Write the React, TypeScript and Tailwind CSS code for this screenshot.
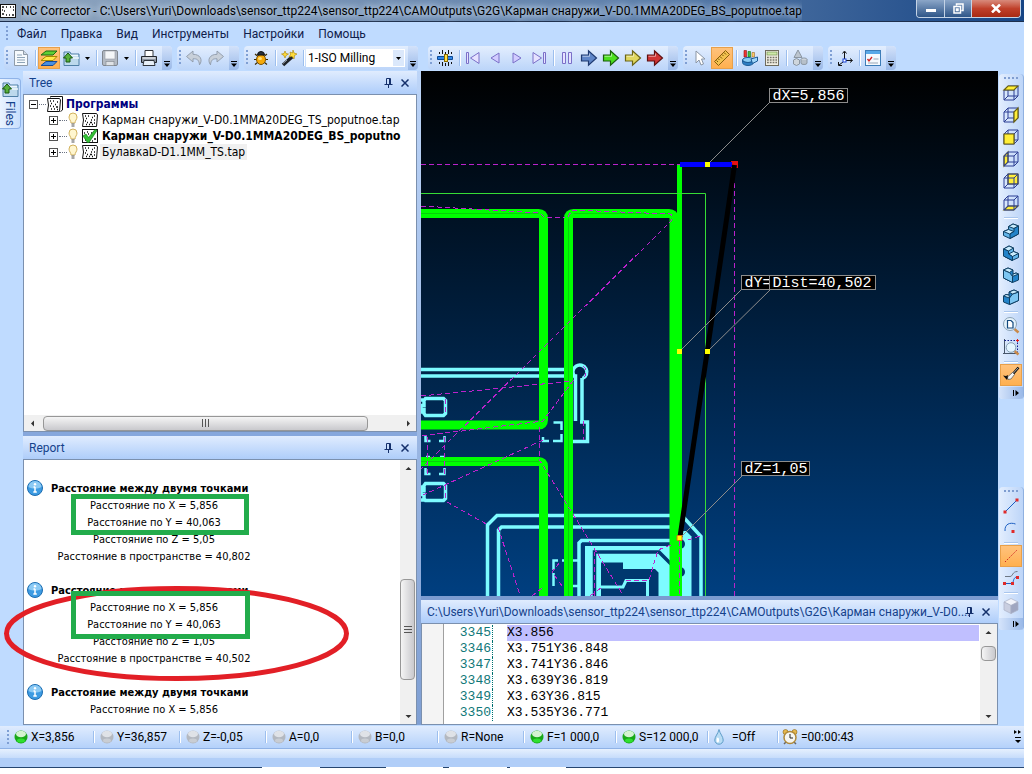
import React from "react";
import clsx from "clsx";

const UI = "font-['Roboto','Noto_Sans',sans-serif]";
const TAHOMA = "font-['DejaVu_Sans_Condensed','DejaVu_Sans',sans-serif]";
const MONO = "font-['Liberation_Mono',monospace]";

type IconProps = { children: React.ReactNode };

const Icon = ({ children }: IconProps) => (
  <svg viewBox="0 0 16 16" className="h-4 w-4 shrink-0 overflow-visible" fill="none">
    {children}
  </svg>
);

/* ---------- icons ---------- */

const ProgramIcon = () => (
  <Icon>
    <path d="M.5 1.500H14.500L15.500 3 14.500 14.500H.5L1.500 8z" fill="#fff" stroke="#111" />
    <path
      d="M3 4h1M6 4h1M12 4h1M4 6.500h1M10 5.500h1M9 8h1M12 8h1M3 9h1M5 10.500h1M8 10.500h2M4 12.500h1M7 12.500h1M10 12.500h1M12 11h1"
      stroke="#111"
      strokeWidth="1.500"
    />
  </Icon>
);

const ProgramGroupIcon = () => (
  <Icon>
    <path d="M3.500 1.500V.5H15.500V14l-2 1.500" fill="#fff" stroke="#111" />
    <path d="M.5 2.500H12.500L13.500 4 12.500 15.500H.5L1.500 9z" fill="#fff" stroke="#111" />
    <path d="M3 5h1M6 5h1M10 6h1M4 7.500h1M8 8.500h1M3 10h1M6 10.500h1M9 11h2M4 13h1M7 13h1M10 13.500h1" stroke="#111" strokeWidth="1.500" />
  </Icon>
);

const CheckedProgramIcon = () => (
  <Icon>
    <rect x=".5" y="1.500" width="15" height="13" fill="#fff" stroke="#111" />
    <path d="M2 5h1M5 4h1M9 5h1M3 12h1M12 11h2M10 13h1M6 6h1" stroke="#111" strokeWidth="1.500" />
    <path d="M1 8l3-2 2.500 3.500L13 1.500l2 1L7 14.500H5.500z" fill="#35c235" stroke="#0f7f18" strokeWidth=".7" />
  </Icon>
);

const BulbIcon = () => (
  <svg viewBox="0 0 10 16" className="h-4 w-[10px]" fill="none">
    <path d="M5 1a4 4 0 0 0-4 4c0 2.500 2 3.500 2 6h4c0-2.500 2-3.500 2-6a4 4 0 0 0-4-4z" fill="#fff6cf" stroke="#d2b25e" />
    <path d="M3.500 12h3M3.500 14h3" stroke="#8a8a8a" strokeWidth="1.500" />
  </svg>
);

const NewIcon = () => (
  <Icon>
    <path d="M1.500.5h9l4 4v11h-13z" fill="#f6fafd" stroke="#8f9ba8" />
    <path d="M10.500.5v4h4" fill="#cfdae5" stroke="#8f9ba8" />
    <path d="M4 5h5M4 7.500h8M4 10h8M4 12.500h8" stroke="#8ea4b8" />
  </Icon>
);

const LayersIcon = () => (
  <Icon>
    <path d="M5 11.500h11l-4 4H0z" fill="#4a8fe0" stroke="#174a98" />
    <path d="M5 6.500h11l-4 4H0z" fill="#ffe94a" stroke="#a68a00" />
    <path d="M5 1h11l-4 4H0z" fill="#5fcf35" stroke="#1c6b12" />
  </Icon>
);

const FolderIcon = () => (
  <Icon>
    <path d="M1 2h6l1 2h8v11.500H1z" fill="#bcd8ec" stroke="#4f7fa6" />
    <path d="M3 5.500h12M4 8h12" stroke="#eef7fd" strokeWidth="1.500" />
    <path d="M5 3l4.500 5H7v4H3V8H.5z" fill="#58b13a" stroke="#17550e" />
  </Icon>
);

const SaveIcon = () => (
  <Icon>
    <rect x=".5" y=".5" width="15" height="15" rx="1.500" fill="#b4bac3" stroke="#80868f" />
    <rect x="3" y="1" width="10" height="8" fill="#f4f6f8" stroke="#969ca4" strokeWidth=".6" />
    <rect x="4" y="11.500" width="8" height="4" fill="#dfe2e6" stroke="#7f858d" strokeWidth=".6" />
  </Icon>
);

const PrinterIcon = () => (
  <Icon>
    <path d="M4 .5h8v6H4z" fill="#fff" stroke="#32363c" />
    <path d="M.5 6.500h15v6H.5z" fill="#8c95a1" stroke="#22262c" />
    <path d="M3 10.500h10l1 5H2z" fill="#e8f0f8" stroke="#30353c" />
    <path d="M1.500 8h13" stroke="#e2e6eb" strokeWidth="1.500" />
  </Icon>
);

const UndoIcon = () => (
  <Icon>
    <path d="M7 1L.5 6.500 7 12V8.800c4-.3 6 1 6.500 6C17 10 14.500 4.300 7 4.300z" fill="#c8d0da" stroke="#8d99a8" strokeWidth=".9" />
  </Icon>
);

const RedoIcon = () => (
  <Icon>
    <path d="M9 1l6.500 5.500L9 12V8.800c-4-.3-6 1-6.500 6C-1 10 1.500 4.300 9 4.300z" fill="#c8d0da" stroke="#8d99a8" strokeWidth=".9" />
  </Icon>
);

const BugIcon = () => (
  <Icon>
    <path d="M2 4l2.500 2M14 4l-2.500 2M1 9.500h3M15 9.500h-3M2 14.500l2.500-2M14 14.500l-2.500-2" stroke="#3a2a00" strokeWidth="1.200" />
    <ellipse cx="8" cy="9.500" rx="4.500" ry="5" fill="#f5a90a" stroke="#7d5200" />
    <path d="M4.500 5a3.500 3.500 0 0 1 7 0z" fill="#26303c" stroke="#111" />
    <ellipse cx="7" cy="8.500" rx="2" ry="1.500" fill="#ffdf7a" />
  </Icon>
);

const WandIcon = () => (
  <Icon>
    <path d="M2 15L12 6" stroke="#20242a" strokeWidth="3.500" />
    <path d="M2 13.500L6 10" stroke="#9aa3ae" />
    <path
      d="M4 1l1 2.500L7.500 4 5 5.500 4 8 3 5.500.5 4 3 3.500zM12 0l1 3 3 1-2.500 1.500L13 9l-2-2.500-3 .5 1.500-2.500L9 2l2.500 1z"
      fill="#ffdc3a"
      stroke="#a87f00"
      strokeWidth=".6"
    />
  </Icon>
);

const FeedIcon = () => (
  <Icon>
    <path d="M2.500 2v2M5.500 0v4M8.500 2v2M11.500 0v4M14.500 2v2M2.500 12v2M5.500 12v4M8.500 13v3M11.500 12v4M14.500 12v2" stroke="#111" />
    <path d="M.5 6.500h15v3H.5z" fill="#2f86e8" stroke="#0d4a96" />
    <rect x="7.500" y="4.500" width="3" height="7" fill="#ffe04a" stroke="#8a6a00" />
  </Icon>
);

const FirstIcon = () => (
  <Icon>
    <path d="M1.500 2.500h2v11h-2zM14 2.500v11L5.500 8z" fill="#e6e2ff" stroke="#7a70c8" />
  </Icon>
);
const PrevIcon = () => (
  <Icon>
    <path d="M12 3v10L4 8z" fill="#d2ccff" stroke="#7a70c8" />
  </Icon>
);
const NextIcon = () => (
  <Icon>
    <path d="M4 3v10l8-5z" fill="#d2ccff" stroke="#7a70c8" />
  </Icon>
);
const LastIcon = () => (
  <Icon>
    <path d="M12.500 2.500h2v11h-2zM2 2.500v11L10.500 8z" fill="#e6e2ff" stroke="#7a70c8" />
  </Icon>
);
const PauseIcon = () => (
  <Icon>
    <path d="M3.500 2.500h3v11h-3zM9.500 2.500h3v11h-3z" fill="#e6e2ff" stroke="#7a70c8" />
  </Icon>
);

const ArrowIcon = ({ color, edge }: { color: string; edge: string }) => (
  <Icon>
    <path d="M.5 5h7V.8L15.500 8l-8 7.200V11h-7z" fill={color} stroke={edge} strokeWidth="1.200" />
    <path d="M1.500 6.300h7V3.500" stroke="#fff" strokeOpacity=".5" />
  </Icon>
);

const CursorIcon = () => (
  <Icon>
    <path d="M4 1v12l3-3 2 5 2.500-1-2-5H13z" fill="#fff" stroke="#8b96a5" />
  </Icon>
);

const RulerIcon = () => (
  <Icon>
    <path d="M11.500.5l4 4-11 11-4-4z" fill="#f3c24f" stroke="#8a5f0c" />
    <path d="M10 2.500l2 2M8 4.500l1.500 1.500M6 6.500l2 2M4 8.500L5.500 10M2.500 10.500l1.500 1.500" stroke="#7a5208" />
  </Icon>
);

const StatsIcon = () => (
  <Icon>
    <path d="M2 .5h2.500V7H2z" fill="#e33" stroke="#911" strokeWidth=".6" />
    <path d="M6 1.500h2.500V7H6z" fill="#4b4" stroke="#171" strokeWidth=".6" />
    <path d="M10 2.500h2.500V7H10z" fill="#fc6" stroke="#963" strokeWidth=".6" />
    <ellipse cx="6" cy="10" rx="5.500" ry="2.500" fill="#8accf5" stroke="#1d5c97" />
    <path d="M.5 10v2.500a5.500 3 0 0 0 11 0V10a5.500 2.500 0 0 1-11 0z" fill="#2d7ec5" stroke="#1d5c97" />
    <path d="M9 9l6.500-2v4l-5 2.500z" fill="#9fd4f8" stroke="#1d5c97" />
  </Icon>
);

const CalcIcon = () => (
  <Icon>
    <rect x="1.500" y=".5" width="13" height="15" fill="#f0eee2" stroke="#6f6c5e" />
    <rect x="3" y="2" width="10" height="3" fill="#cde8a9" stroke="#6d8a4a" strokeWidth=".6" />
    <path d="M3 7.500h10M3 10h10M3 12.500h10" stroke="#77746a" strokeWidth="1.500" strokeDasharray="1.800 1" />
  </Icon>
);

const ConeIcon = () => (
  <Icon>
    <path d="M6 0L2 7.500h8z" fill="#bcc5cf" stroke="#8c97a3" />
    <path d="M1.500 10l3-1.500 3 1.500v4l-3 1.500-3-1.500z" fill="#cfd6dd" stroke="#8c97a3" />
    <ellipse cx="12" cy="9.500" rx="3" ry="1.500" fill="#dfe4e9" stroke="#8c97a3" />
    <path d="M9 9.500v3.500a3 1.500 0 0 0 6 0V9.500" fill="#b7c0ca" stroke="#8c97a3" />
  </Icon>
);

const AxesIcon = () => (
  <Icon>
    <path d="M7.500 9V2M9 10.500h6M6 12l-4 3" stroke="#111" />
    <path d="M5.500 3.500l2-2.500 2 2.500M13 8.500l2.500 2-2.500 2M1.500 12v3.500H5" stroke="#111" />
    <rect x="6" y="9" width="3" height="3" fill="#fff" stroke="#1b45d8" />
  </Icon>
);

const OptionsIcon = () => (
  <Icon>
    <rect x=".5" y=".5" width="15" height="15" fill="#f6fafe" stroke="#3d7db8" />
    <path d="M1 2.500h14" stroke="#5aa9e8" strokeWidth="3" />
    <path d="M2.500 9l1.500 2 3-4" stroke="#d02323" strokeWidth="1.300" />
    <path d="M8.500 9h5M3 13h10" stroke="#9aa6b4" />
  </Icon>
);

const cubeFaces: Record<string, string> = {
  top: "M1 5L5 1h10l-4 4z",
  right: "M11 5l4-4v10l-4 4z",
  front: "M1 5h10v10H1z",
  left: "M1 5l4-4v10l-4 4z",
  back: "M5 1h10v10H5z",
  bottom: "M1 15l4-4h10l-4 4z",
};

const CubeIcon = ({ face }: { face: string }) => {
  const plane = <path d={cubeFaces[face]} fill="#ffee38" stroke="#6b6110" strokeWidth="1.200" />;
  const hidden = face === "back" || face === "bottom" || face === "left";
  return (
    <Icon>
      {hidden && plane}
      <path d="M1 5h10v10H1zM5 1h10v10H5zM1 5l4-4M11 5l4-4M1 15l4-4M11 15l4-4" stroke="#2d3f94" />
      {!hidden && plane}
    </Icon>
  );
};

const SolidIcon = ({ variant }: { variant: number }) => (
  <Icon>
    {variant === 0 && (
      <g stroke="#0f3f63" strokeLinejoin="round">
        <path d="M.5 8.500l5-2V3.500L10 1l5.500 2v8L7 15.500l-6.500-3z" fill="#63b6ea" />
        <path d="M5.500 3.500L10 1l5.500 2-4.500 2.500zM.5 8.500l5-2 5.500 2-4.500 2.500z" fill="#c9ecfd" />
        <path d="M11 5.500L15.500 3v8L7 15.500V11l4-2.500z" fill="#2283c9" />
      </g>
    )}
    {variant === 1 && (
      <g stroke="#0f3f63" strokeLinejoin="round">
        <path d="M.5 4L6 1l4.500 2v3.500l5 2v4L9 15.500.5 11z" fill="#63b6ea" />
        <path d="M.5 4L6 1l4.500 2L5.500 6zM5.500 9l5-2.500 5 2-6 3z" fill="#c9ecfd" />
        <path d="M.5 4l5 2v3l4 2.500v4L.5 11z" fill="#2283c9" />
      </g>
    )}
    {variant === 2 && (
      <g stroke="#0f3f63" strokeLinejoin="round">
        <path d="M.5 3L5 1l5 2v4l3-1 2.500 1v6l-6 2.500L.5 11z" fill="#2283c9" />
        <path d="M.5 3l6 2.500 3 4v6L.5 11z" fill="#7cc6f2" />
        <path d="M.5 3L5 1l5 2-3.500 2.500zM9.500 9.500L10 7l3-1 2.500 1z" fill="#c9ecfd" />
      </g>
    )}
    {variant === 3 && (
      <g stroke="#0f3f63" strokeLinejoin="round">
        <path d="M15.500 3L11 1 6 3v3L3 5.500.5 7v6l6 2.500 9-4z" fill="#2283c9" />
        <path d="M15.500 3v8.500l-9 4V9l3-4z" fill="#7cc6f2" />
        <path d="M15.500 3L11 1 6 3l3.500 2zM.5 7L3 5.500 6 6l.5 3z" fill="#c9ecfd" />
      </g>
    )}
  </Icon>
);

const ZoomPageIcon = () => (
  <Icon>
    <path d="M11.500 12l4 3.500" stroke="#c98a4a" strokeWidth="2.500" />
    <circle cx="7" cy="7" r="6.500" fill="#e4f2fb" stroke="#8aa2b6" />
    <path d="M4.500 3.500h3.500l2 2v5.500H4.500z" fill="#fff" stroke="#12497e" strokeWidth="1.200" />
  </Icon>
);

const ZoomAreaIcon = () => (
  <Icon>
    <path d="M1.500 0v15M0 14.500h15" stroke="#47566a" />
    <path d="M1.500 1.500h13v13" stroke="#101b8a" strokeDasharray="1.500 1.500" />
    <path d="M11.500 12l4 3.500" stroke="#c98a4a" strokeWidth="2.500" />
    <circle cx="8" cy="8.500" r="4.800" fill="#e4f5ff" stroke="#86a0b4" />
    <path d="M14.500 0v3M13 1.500h3" stroke="#e01818" />
  </Icon>
);

const BrushIcon = () => (
  <Icon>
    <path d="M15.500.5L9 8" stroke="#111" strokeWidth="2.500" />
    <path d="M15 1L9.500 7" stroke="#e8e8e8" strokeWidth=".7" />
    <path d="M9.500 5.500l2 2L8 12l-3 .5L4.500 10z" fill="#f4f4f4" stroke="#555" strokeWidth=".7" />
    <path d="M0 8.500l3 .5 2-1-.5 3.500L4 13z" fill="#111" />
  </Icon>
);

const LineIcon = () => (
  <Icon>
    <path d="M2 14L14 2" stroke="#1c5fc2" />
    <path d="M.5 12.500h3v3h-3zM12.500.5h3v3h-3z" fill="#e02a2a" />
  </Icon>
);
const ArcIcon = () => (
  <Icon>
    <path d="M2 11C1.500 4 7 2 12.500 4" stroke="#1c5fc2" />
    <path d="M8.500 10h3v3h-3z" fill="#e02a2a" />
  </Icon>
);
const DashIcon = () => (
  <Icon>
    <path d="M2 14L14 2" stroke="#cc2020" strokeDasharray="1.500 1.500" />
  </Icon>
);
const ContourIcon = () => (
  <Icon>
    <path d="M2 6.500h5c3 0 2-5 7.500-5" stroke="#6e7783" />
    <path d="M2 13.500h7c2 0 0-5 5-7" stroke="#1c5fc2" />
    <path d="M0 12h3v3H0zM8 12h3v3H8zM13 6h3v3h-3z" fill="#e02a2a" />
  </Icon>
);
const GreyCubeIcon = () => (
  <Icon>
    <path d="M8 .5l7 3.500-7 3.500L1 4z" fill="#f1f3fa" stroke="#aab0c4" strokeWidth=".7" />
    <path d="M1 4l7 3.500v8L1 12z" fill="#c9cee0" stroke="#aab0c4" strokeWidth=".7" />
    <path d="M15 4L8 7.500v8l7-3.500z" fill="#9fa6c0" stroke="#aab0c4" strokeWidth=".7" />
  </Icon>
);

const InfoIcon = () => (
  <Icon>
    <circle cx="8" cy="8" r="7.500" fill="#3d9be2" stroke="#1c6cb0" />
    <path d="M1.500 7a6.500 6 0 0 1 13 0c-4 2-9 2-13 0z" fill="#8ccaf4" />
    <path d="M8 6.800v5M6.500 7h1.500M6.300 12h3.500" stroke="#fff" strokeWidth="1.500" />
    <circle cx="8" cy="4.200" r="1.200" fill="#fff" />
  </Icon>
);

const PinIcon = () => (
  <svg viewBox="0 0 9 10" className="h-[10px] w-[9px]" fill="none" stroke="#15306b">
    <path d="M2.500 6V.5h4V6M.5 6.500h8M4.500 7v3M5.500 1v5" />
  </svg>
);
const CloseIcon = () => (
  <svg viewBox="0 0 8 8" className="h-2 w-2" fill="none" stroke="#15306b" strokeWidth="1.500">
    <path d="M.5.5l7 7M7.500.5l-7 7" />
  </svg>
);

/* ---------- toolbar pieces ---------- */

const Grip = () => (
  <span className="mx-[2px] my-1 w-[2px] self-stretch bg-[repeating-linear-gradient(#7f9fd4_0_2px,transparent_2px_4px)]" />
);
const Sep = () => (
  <span className="flex w-[6px] justify-center self-stretch py-1">
    <span className="w-px bg-[#9dbfee] shadow-[1px_0_#fff]" />
  </span>
);

const ToolButton = ({ label, active, children }: { label: string; active?: boolean; children: React.ReactNode }) => (
  <button
    aria-label={label}
    className={clsx(
      "flex h-[22px] w-[22px] shrink-0 items-center justify-center",
      active && "border border-[#e8a04a] bg-gradient-to-b from-[#ffc27c] to-[#ffb04f]"
    )}>
    {children}
  </button>
);

const DropArrow = () => (
  <button aria-label="Список" className="flex w-[11px] items-center justify-center">
    <svg viewBox="0 0 5 3" className="h-[3px] w-[5px]">
      <path d="M0 0h5L2.500 3z" fill="#000" />
    </svg>
  </button>
);

const Overflow = () => (
  <button
    aria-label="Ещё"
    className="ml-[2px] flex w-[10px] items-end justify-center self-stretch rounded-r bg-gradient-to-b from-[#d3e2fa] to-[#9ab9e8] pb-[3px]">
    <svg viewBox="0 0 6 6" className="h-[6px] w-[6px]">
      <path d="M0 0h6v1H0zM0 2.500h6L3 6z" fill="#000" />
    </svg>
  </button>
);

const Toolbar = ({ children }: { children: React.ReactNode }) => (
  <div className="flex h-6 items-center rounded bg-gradient-to-b from-[#e3eefe] to-[#bcd5f9]">
    <Grip />
    {children}
    <Overflow />
  </div>
);

const SideToolbar = ({ children }: { children: React.ReactNode }) => (
  <div className="flex w-[25px] flex-col items-center rounded border-r border-[#8fb0e0] bg-gradient-to-r from-[#e3eefe] to-[#bdd5f8]">
    <span className="mx-1 my-[3px] h-[2px] w-[14px] bg-[repeating-linear-gradient(90deg,#7f9dd0_0_2px,transparent_2px_4px)]" />
    {children}
    <button
      aria-label="Ещё"
      className="mt-px flex h-3 w-full items-center justify-end rounded-b bg-gradient-to-r from-[#d5e4fb] to-[#9ab9e8] pr-1">
      <svg viewBox="0 0 6 6" className="h-[6px] w-[6px]">
        <path d="M0 0h1v6H0zM2.500 0v6L6 3z" fill="#000" />
      </svg>
    </button>
  </div>
);

const SideSep = () => (
  <span className="flex h-[6px] items-center">
    <span className="h-px w-[14px] bg-[#a9c6ee] shadow-[0_1px_#fff]" />
  </span>
);

const PanelHeader = ({ title }: { title: string }) => (
  <div
    className={clsx(
      "flex h-6 shrink-0 items-center gap-2 border-b border-[#7b90ae] bg-gradient-to-b from-[#e0ecfe] to-[#aecdfa] pr-2 pl-[6px] text-[12px] text-[#15428b]",
      UI
    )}>
    <h2 className="min-w-0 flex-1 whitespace-nowrap">{title}</h2>
    <button aria-label="Закрепить">
      <PinIcon />
    </button>
    <button aria-label="Закрыть">
      <CloseIcon />
    </button>
  </div>
);

const ScrollArrow = ({ dir }: { dir: "up" | "down" | "left" | "right" }) => {
  const paths = {
    up: "M.5 5h6L3.500 2z",
    down: "M.5 2h6L3.500 5z",
    left: "M5 .5v6L2 3.500z",
    right: "M2 .5v6l3-3z",
  };
  return (
    <button aria-label={dir} className="flex h-4 w-4 shrink-0 items-center justify-center">
      <svg viewBox="0 0 7 7" className="h-[7px] w-[7px]">
        <path d={paths[dir]} fill="#333" />
      </svg>
    </button>
  );
};

/* ---------- data ---------- */

const menu = ["Файл", "Правка", "Вид", "Инструменты", "Настройки", "Помощь"];

const programs = [
  { name: "Карман снаружи_V-D0.1MMA20DEG_TS_poputnoe.tap", state: "normal" },
  { name: "Карман снаружи_V-D0.1MMA20DEG_BS_poputno", state: "current" },
  { name: "БулавкаD-D1.1MM_TS.tap", state: "selected" },
];

const reports = [
  ["Расстояние по X = 5,856", "Расстояние по Y = 40,063", "Расстояние по Z = 5,05", "Расстояние в пространстве = 40,802"],
  ["Расстояние по X = 5,856", "Расстояние по Y = 40,063", "Расстояние по Z = 1,05", "Расстояние в пространстве = 40,502"],
  ["Расстояние по X = 5,856"],
];

const codeLines = [
  { n: 3345, text: "X3.856" },
  { n: 3346, text: "X3.751Y36.848" },
  { n: 3347, text: "X3.741Y36.846" },
  { n: 3348, text: "X3.639Y36.819" },
  { n: 3349, text: "X3.63Y36.815" },
  { n: 3350, text: "X3.535Y36.771" },
];

const axes = [
  { text: "X=3,856", on: true, width: "w-[86px]" },
  { text: "Y=36,857", on: false, width: "w-[86px]" },
  { text: "Z=-0,05", on: false, width: "w-[86px]" },
  { text: "A=0,0", on: false, width: "w-[86px]" },
  { text: "B=0,0", on: false, width: "w-[86px]" },
  { text: "R=None", on: false, width: "w-[86px]" },
  { text: "F=1 000,0", on: true, width: "w-[92px]" },
  { text: "S=12 000,0", on: true, width: "w-[92px]" },
];

/* ---------- sections ---------- */

function TitleBar() {
  return (
    <header className="flex h-[22px] shrink-0 items-start border-b border-[#1d2f4d] bg-gradient-to-r from-[#8fa5bf] via-[#5f81ac] via-60% to-[#164585] pr-[3px]">
      <svg viewBox="0 0 16 14" className="mt-1 h-[14px] w-4 shrink-0" fill="none">
        <rect x=".5" y=".5" width="15" height="13" fill="#fff" stroke="#111" />
        <path d="M2 3h2M6 3h1M10 3h1M13 3h1M2 6h1M4 7h1M2 10h2M6 11h1M9 11h1M12 11h2M13 6h1" stroke="#111" strokeWidth="1.500" />
      </svg>
      <h1
        className={clsx(
          "ml-[5px] min-w-0 truncate text-[12px] leading-[22px] text-black [text-shadow:0_0_6px_#d8e6f5,0_0_8px_#d8e6f5]",
          UI
        )}>
        NC Corrector - C:\Users\Yuri\Downloads\sensor_ttp224\sensor_ttp224\CAMOutputs\G2G\Карман
        снаружи_V-D0.1MMA20DEG_BS_poputnoe.tap
      </h1>
      <div className="ml-auto flex h-[18px] shrink-0 overflow-hidden rounded-b border border-t-0 border-[#c4d3e6]">
        <button
          aria-label="Свернуть"
          className="flex w-7 items-center justify-center border-r border-[#c4d3e6] bg-gradient-to-b from-[#8ba6c8] to-[#2f5688]">
          <span className="mt-1 h-[3px] w-[10px] bg-white" />
        </button>
        <button
          aria-label="Восстановить"
          className="flex w-[27px] items-center justify-center border-r border-[#c4d3e6] bg-gradient-to-b from-[#8ba6c8] to-[#2f5688]">
          <svg viewBox="0 0 11 11" className="h-[11px] w-[11px]" fill="none" stroke="#fff" strokeWidth="1.500">
            <path d="M3.500 2.500v-1.500h6.500v6.500H8.500M1 3.500h6.500V10H1zM3.500 6h1.500v1.500H3.500z" />
          </svg>
        </button>
        <button
          aria-label="Закрыть"
          className="flex w-12 items-center justify-center bg-gradient-to-b from-[#d88a7b] via-[#c0402a] to-[#a82a14]">
          <svg viewBox="0 0 10 9" className="h-[9px] w-[10px]" fill="none" stroke="#fff" strokeWidth="2.500">
            <path d="M1 .5l8 8M9 .5l-8 8" />
          </svg>
        </button>
      </div>
    </header>
  );
}

function MenuBar() {
  return (
    <nav className={clsx("flex h-6 shrink-0 items-center pl-1 text-[12px] text-[#10204a]", UI)}>
      <Grip />
      {menu.map((item) => (
        <button key={item} className="px-[7px]">
          {item}
        </button>
      ))}
    </nav>
  );
}

function Toolbars() {
  return (
    <div className="flex h-[25px] shrink-0 gap-[5px] pl-1">
      <Toolbar>
        <ToolButton label="Новый"><NewIcon /></ToolButton>
        <Sep />
        <ToolButton label="Слои" active><LayersIcon /></ToolButton>
        <ToolButton label="Открыть"><FolderIcon /></ToolButton>
        <DropArrow />
        <Sep />
        <ToolButton label="Сохранить"><SaveIcon /></ToolButton>
        <DropArrow />
        <Sep />
        <ToolButton label="Печать"><PrinterIcon /></ToolButton>
      </Toolbar>
      <Toolbar>
        <ToolButton label="Отменить"><UndoIcon /></ToolButton>
        <ToolButton label="Повторить"><RedoIcon /></ToolButton>
      </Toolbar>
      <Toolbar>
        <ToolButton label="Отладка"><BugIcon /></ToolButton>
        <Sep />
        <ToolButton label="Мастер"><WandIcon /></ToolButton>
        <Sep />
        <div className="relative mr-px w-[99px]">
          <select
            aria-label="Постпроцессор"
            className={clsx("block h-[18px] w-full appearance-none bg-white pl-[2px] text-[12px] leading-[18px] text-black", UI)}>
            <option>1-ISO Milling</option>
          </select>
          <span className="pointer-events-none absolute inset-y-px right-px flex w-[11px] items-center justify-center bg-[#dbe8fb]">
            <svg viewBox="0 0 5 3" className="h-[3px] w-[5px]">
              <path d="M0 0h5L2.500 3z" fill="#000" />
            </svg>
          </span>
        </div>
      </Toolbar>
      <span className="w-0" />
      <Toolbar>
        <ToolButton label="Скорость"><FeedIcon /></ToolButton>
        <Sep />
        <ToolButton label="В начало"><FirstIcon /></ToolButton>
        <ToolButton label="Назад"><PrevIcon /></ToolButton>
        <ToolButton label="Вперёд"><NextIcon /></ToolButton>
        <ToolButton label="В конец"><LastIcon /></ToolButton>
        <Sep />
        <ToolButton label="Пауза"><PauseIcon /></ToolButton>
        <ToolButton label="Шаг"><ArrowIcon color="#5f86c8" edge="#1f3a70" /></ToolButton>
        <ToolButton label="Пуск"><ArrowIcon color="#4be01e" edge="#1a5c0c" /></ToolButton>
        <ToolButton label="До точки"><ArrowIcon color="#e0d75e" edge="#6b6415" /></ToolButton>
        <ToolButton label="До конца"><ArrowIcon color="#cf3434" edge="#5e1010" /></ToolButton>
      </Toolbar>
      <Toolbar>
        <ToolButton label="Выбор"><CursorIcon /></ToolButton>
        <ToolButton label="Измерить" active><RulerIcon /></ToolButton>
        <Sep />
        <ToolButton label="Статистика"><StatsIcon /></ToolButton>
        <ToolButton label="Калькулятор"><CalcIcon /></ToolButton>
        <Sep />
        <ToolButton label="Тела"><ConeIcon /></ToolButton>
      </Toolbar>
      <Toolbar>
        <ToolButton label="Оси"><AxesIcon /></ToolButton>
        <Sep />
        <ToolButton label="Параметры"><OptionsIcon /></ToolButton>
      </Toolbar>
    </div>
  );
}

const Expander = ({ open }: { open?: boolean }) => (
  <button aria-label={open ? "Свернуть" : "Развернуть"} className="shrink-0">
    <svg viewBox="0 0 9 9" className="h-[9px] w-[9px]" fill="none" stroke="#555">
      <rect x=".5" y=".5" width="8" height="8" fill="#fff" />
      <path d={open ? "M2 4.500h5" : "M2 4.500h5M4.500 2v5"} stroke="#000" />
    </svg>
  </button>
);

function TreePanel() {
  return (
    <section className="flex min-h-0 flex-[361_1_0] flex-col">
      <PanelHeader title="Tree" />
      <div className="flex min-h-0 flex-1 flex-col border border-t-0 border-[#7b90ae] bg-white">
        <div className={clsx("min-h-0 flex-1 overflow-hidden pt-px pl-[5px] text-[12px] leading-4 text-black", TAHOMA)}>
          <div className="flex h-4 items-center">
            <Expander open />
            <span className="mx-px w-[7px] border-t border-dotted border-gray-500" />
            <ProgramGroupIcon />
            <span className="pl-[3px] font-bold text-[#000080]">Программы</span>
          </div>
          <ul className="pl-[15px]">
            {programs.map((p) => (
              <li key={p.name} className="flex h-4 items-center whitespace-nowrap">
                <span className="mr-1 h-4 w-px shrink-0" />
                <Expander />
                <span className="mx-px w-2 shrink-0 border-t border-dotted border-gray-500" />
                <span className="mr-1 shrink-0">
                  <BulbIcon />
                </span>
                {p.state === "current" ? <CheckedProgramIcon /> : <ProgramIcon />}
                <span
                  className={clsx(
                    "ml-[2px] px-[2px]",
                    p.state === "current" && "font-bold",
                    p.state === "selected" && "bg-[#f0f0f0]"
                  )}>
                  {p.name}
                </span>
              </li>
            ))}
          </ul>
        </div>
        <div className="flex h-4 shrink-0 items-center bg-[#f0f0f0]">
          <ScrollArrow dir="left" />
          <div className="ml-[3px] flex h-[15px] flex-1 items-center justify-center gap-[2px] rounded-sm border border-[#979797] bg-gradient-to-b from-[#f5f5f5] to-[#c9c9cd]">
            <span className="h-2 w-px bg-[#555]" />
            <span className="h-2 w-px bg-[#555]" />
            <span className="h-2 w-px bg-[#555]" />
          </div>
          <span className="w-8" />
          <ScrollArrow dir="right" />
        </div>
      </div>
    </section>
  );
}

function ReportPanel() {
  return (
    <section className="relative flex min-h-0 flex-[289_1_0] flex-col">
      <PanelHeader title="Report" />
      <div className="flex min-h-0 flex-1 border border-t-0 border-[#7b90ae] bg-white">
        <div className={clsx("min-w-0 flex-1 overflow-hidden pt-5 pl-[3px] text-[11px] leading-[17px] text-black", TAHOMA)}>
          {reports.map((lines, i) => (
            <article key={i} className="mb-[17px] flex items-start gap-2">
              <InfoIcon />
              <div className="w-[206px] text-center">
                <h3 className="text-left font-bold">Расстояние между двумя точками</h3>
                {lines.map((line) => (
                  <p key={line}>{line}</p>
                ))}
              </div>
            </article>
          ))}
        </div>
        <div className="flex w-4 flex-col bg-[#f0f0f0]">
          <ScrollArrow dir="up" />
          <span className="flex-[102_1_0]" />
          <div className="flex w-[15px] flex-[98_1_0] flex-col items-center justify-center gap-[2px] rounded-sm border border-[#979797] bg-gradient-to-r from-[#f5f5f5] to-[#c9c9cd]">
            <span className="h-px w-2 bg-[#555]" />
            <span className="h-px w-2 bg-[#555]" />
            <span className="h-px w-2 bg-[#555]" />
          </div>
          <span className="flex-[28_1_0]" />
          <ScrollArrow dir="down" />
        </div>
      </div>
      {/* hand-drawn marks over the report */}
      <svg
        viewBox="0 436 360 260"
        className="pointer-events-none absolute top-0 -left-[23px] h-[260px] w-[360px]"
        fill="none"
        strokeWidth="5">
        <ellipse cx="176.500" cy="633.500" rx="170" ry="45" stroke="#e21f26" />
        <rect x="73.500" y="496.500" width="173" height="36" stroke="#22ac4b" />
        <rect x="73.500" y="593.500" width="174" height="43" stroke="#22ac4b" />
      </svg>
    </section>
  );
}

const Label = ({ x, y, w, text }: { x: number; y: number; w: number; text: string }) => (
  <g>
    <rect x={x} y={y} width={w} height="14" fill="#000" stroke="#8c8c8c" />
    <text x={x + 3} y={y + 11} fill="#fff" className={clsx("text-[15px]", MONO)}>
      {text}
    </text>
  </g>
);

function Viewport() {
  return (
    <svg viewBox="421 71 577 525" preserveAspectRatio="xMinYMin slice" className="block min-h-0 w-full flex-[525_1_0]" fill="none">
      <defs>
        <linearGradient id="sky" x1="0" y1="0" x2="0" y2="1">
          <stop offset="0" stopColor="#000000" />
          <stop offset="1" stopColor="#003f80" />
        </linearGradient>
      </defs>
      <rect x="421" y="71" width="577" height="525" fill="url(#sky)" />

      {/* copper tracks */}
      <g stroke="#7dfbff" strokeWidth="3.500">
        <path d="M421 369.500H573M421 376H575.500V421M582 378V421" />
        <path d="M574.500 376.500A7 7 0 1 1 582.500 378.500" />
        <path d="M580 422H587.500V441.500H573" />
        <path d="M421 400h3M421 412h3M425.500 398.500h18l2 2v13l-2 2h-18l-1.500-2v-4h-3v-4h3v-5z" />
        <path d="M421 487h3M421 500h3M425.500 483.500h18l2 2v13l-2 2h-18l-1.500-2v-4h-3v-4h3v-5z" />
        <path d="M425.500 435v6h5M439 441h5.500v-5M425.500 468v6h5M439 474h5.500v-6M426 457h4M440 457h4" strokeWidth="2.500" />
        <path d="M543 437v4h6M553 441h8.500v-7M561.500 430v-7.500h-8" strokeWidth="2.500" />
        <path d="M487.500 596V525L497 515.500H682L701 536.500V596" />
        <path d="M498.500 596V530L501.500 527H682" />
        <path d="M579 596V543L581.500 540.500H672" />
        <path d="M580 560.500H562M558 560.500H553.500V570M553.500 573V586M573 586H579" strokeWidth="2.500" />
      </g>
      <path d="M585 546H672V596H585z" fill="#7dfbff" />
      <path d="M678 531H686L691.500 536.500V596H678z" fill="#7dfbff" />
      <path d="M594.500 596V552H659L671 564" stroke="#00386f" strokeWidth="3.500" />
      <path d="M601 562.500H623V569H655L658.500 572.500V596H601z" fill="#00386f" />
      <path d="M601 587H623L626 580.500H647.500V596" stroke="#7dfbff" strokeWidth="3" />
      <circle cx="680" cy="544" r="5" fill="#00386f" />
      <circle cx="680" cy="572" r="5" fill="#00386f" />

      {/* milled contours */}
      <g stroke="#00ff00" strokeWidth="9">
        <path d="M421 213.500H538.500Q543.500 213.500 543.500 218.500V420Q543.500 425 538.500 425H421" />
        <path d="M421 461.500H538.500Q543.500 461.500 543.500 466.500V596" />
        <path d="M568.500 596V218.500Q568.500 213.500 573.500 213.500H669Q674 213.500 674 218.500V596" />
        <path d="M679.500 165V596" strokeWidth="5" />
      </g>
      <path d="M421 213.500H539M568.500 596V218.500M573.500 213.500H669M421 461.500H539" stroke="#14901a" strokeOpacity=".45" strokeWidth="1" />
      <path d="M421 193.500H705.500V596" stroke="#36dc36" />

      {/* rapid moves */}
      <g stroke="#bb22cc" strokeDasharray="5 3" shapeRendering="crispEdges">
        <path d="M421 164.500H680M734.500 183V596" />
        <path d="M421 206L540 213L545 218L565 217M568 217L572 210L670 214Q675 217 670 222L421 469" />
        <path d="M421 396L573 381L543 421L421 436M539.500 427V460L623 595" />
        <path d="M543 440L423 495M447 502L488 525M498 527L520 595M427.500 437V477M444.500 437V477" />
        <path d="M583 421V440M583 366A7 7 0 0 1 584 377M445.500 399V414M445.500 485V499" />
        <path d="M700 536L685 541M671 545L658 550L649 580M562 586L552 572L560 562M594.500 596V552M626 580H647" />
        <path d="M532 596L542 588M590 596L601 588M679.500 541V596" />
      </g>

      {/* measured segment */}
      <path d="M731 161h7v7h-7z" fill="#e81010" />
      <path d="M680 164.500H732" stroke="#0000ff" strokeWidth="5" />
      <path d="M734.500 165L680 537" stroke="#000" strokeWidth="5" />
      <g stroke="#8c8c8c">
        <path d="M708 164L770 102M680 351L741 290M708 351L770 290M680 538L742 476" />
      </g>
      <g fill="#ffff00">
        <path d="M705 162h5v5h-5zM677 349h5v5h-5zM705 349h5v5h-5z" />
        <path d="M677 535.500h5v5h-5z" stroke="#e07010" />
      </g>

      <Label x={769.5} y={88.5} w={78} text="dX=5,856" />
      <Label x={741.5} y={275.5} w={40} text="dY=" />
      <Label x={769.5} y={275.5} w={106} text="Dist=40,502" />
      <Label x={741.5} y={461.5} w={68} text="dZ=1,05" />
    </svg>
  );
}

function CodePanel() {
  return (
    <section className="flex min-h-0 flex-[125_1_0] flex-col">
      <PanelHeader title="C:\Users\Yuri\Downloads\sensor_ttp224\sensor_ttp224\CAMOutputs\G2G\Карман снаружи_V-D0...." />
      <div className="flex min-h-0 flex-1 border border-t-0 border-[#7b90ae] bg-white">
        <span className="w-[22px] shrink-0 border-r border-[#a0a0a0] bg-[#f4f4f4]" />
        <div className={clsx("min-w-0 flex-1 overflow-hidden pt-px text-[13px] leading-4", MONO)}>
          {codeLines.map((line, i) => (
            <div key={line.n} className="flex h-4">
              <span className="w-[49px] shrink-0 border-r border-dotted border-[#007070] pr-px text-right text-[#107878]">
                {line.n}
              </span>
              <code className={clsx("ml-[14px] flex-1 font-[inherit] text-black", i === 0 && "bg-[#c0bfff]")}>{line.text}</code>
            </div>
          ))}
        </div>
        <div className="ml-px flex w-[17px] flex-col items-center bg-[#f0f0f0]">
          <ScrollArrow dir="up" />
          <div className="mt-[6px] h-[15px] w-[15px] rounded-sm border border-[#979797] bg-gradient-to-r from-[#f5f5f5] to-[#c9c9cd]" />
          <span className="flex-1" />
          <ScrollArrow dir="down" />
        </div>
      </div>
    </section>
  );
}

function RightDock() {
  return (
    <aside className="flex w-[26px] shrink-0 flex-col gap-[88px] pt-[3px] pl-px">
      <SideToolbar>
        {Object.keys(cubeFaces).map((face) => (
          <ToolButton key={face} label={face}>
            <CubeIcon face={face} />
          </ToolButton>
        ))}
        <SideSep />
        {[0, 1, 2, 3].map((v) => (
          <ToolButton key={v} label={`Изометрия ${v + 1}`}>
            <SolidIcon variant={v} />
          </ToolButton>
        ))}
        <SideSep />
        <ToolButton label="Показать всё"><ZoomPageIcon /></ToolButton>
        <ToolButton label="Увеличить область"><ZoomAreaIcon /></ToolButton>
        <SideSep />
        <ToolButton label="Очистить" active><BrushIcon /></ToolButton>
      </SideToolbar>
      <SideToolbar>
        <ToolButton label="Отрезок"><LineIcon /></ToolButton>
        <ToolButton label="Дуга"><ArcIcon /></ToolButton>
        <SideSep />
        <ToolButton label="Холостой ход" active><DashIcon /></ToolButton>
        <ToolButton label="Контур"><ContourIcon /></ToolButton>
        <SideSep />
        <ToolButton label="Заготовка"><GreyCubeIcon /></ToolButton>
      </SideToolbar>
    </aside>
  );
}

const Lamp = ({ on }: { on: boolean }) => (
  <svg viewBox="0 0 14 14" className="h-[14px] w-[14px] shrink-0">
    <circle cx="7" cy="7" r="6.500" fill={on ? "#18a818" : "#b3b8c0"} />
    <ellipse cx="7" cy="4" rx="5" ry="3.200" fill={on ? "#d4f3d0" : "#dfe2e7"} />
    <ellipse cx="7" cy="10.500" rx="4" ry="2" fill={on ? "#2fe02f" : "#c9cdd3"} />
  </svg>
);

function StatusBar() {
  return (
    <footer className={clsx("shrink-0 text-[12px] text-black", UI)}>
      <div className="mt-px flex h-[23px] items-center border-b border-[#8fb2e6] bg-gradient-to-b from-[#e0ecfe] to-[#b4d1fa] pl-[5px]">
        <Grip />
        <span className="w-[3px]" />
        {axes.map((a) => (
          <div key={a.text} className={clsx("flex shrink-0 items-center gap-[3px]", a.width)}>
            <Lamp on={a.on} />
            <span className="flex-1 whitespace-nowrap">{a.text}</span>
            <span className="mr-[6px] h-3 w-px bg-[#9dbfee] shadow-[1px_0_#fff]" />
          </div>
        ))}
        <div className="flex w-[68px] items-center gap-2">
          <svg viewBox="0 0 10 16" className="h-4 w-[10px]">
            <path d="M5 .5C4 5 .8 7.500.8 11a4.200 4.200 0 0 0 8.400 0C9.200 7.500 6 5 5 .5z" fill="#b8dcf4" stroke="#5e9cc8" />
            <ellipse cx="3.800" cy="11" rx="1.300" ry="2.500" fill="#fff" />
          </svg>
          <span className="flex-1">=Off</span>
          <span className="mr-1 h-3 w-px bg-[#9dbfee] shadow-[1px_0_#fff]" />
        </div>
        <div className="flex items-center gap-[3px]">
          <Icon>
            <path d="M2 15l2-2M14 15l-2-2" stroke="#666" strokeWidth="1.500" />
            <circle cx="3.500" cy="3" r="2.500" fill="#e7b84c" stroke="#8a6418" strokeWidth=".6" />
            <circle cx="12.500" cy="3" r="2.500" fill="#e7b84c" stroke="#8a6418" strokeWidth=".6" />
            <circle cx="8" cy="8.500" r="6" fill="#f6f6f2" stroke="#b08a3a" strokeWidth="1.500" />
            <path d="M8 5v4h3" stroke="#222" />
          </Icon>
          <span>=00:00:43</span>
        </div>
        <svg viewBox="0 0 8 14" className="mr-[2px] ml-auto h-[14px] w-2" fill="#000">
          <path d="M0 0l3 2-3 2zM4 0l3 2-3 2zM1 7h6v1H1zM1 10h6l-3 3z" />
        </svg>
      </div>
      <div className="h-[9px] bg-gradient-to-b from-[#e6f0fe] to-[#c6dcfb]" />
      <div className="h-[9px] bg-[#b1cef8]" />
      <div className="flex h-px bg-[#274670]">
        <span className="ml-[262px] w-[58px] bg-white" />
        <span className="ml-[66px] w-[57px] bg-white" />
        <span className="ml-[6px] w-[58px] bg-white" />
        <span className="ml-[3px] w-[56px] bg-white" />
      </div>
    </footer>
  );
}

export default function App() {
  return (
    <div className="h-screen bg-white pr-2 pb-[6px]">
      <div className="flex h-full flex-col overflow-hidden bg-[#bfdbff]">
        <TitleBar />
        <MenuBar />
        <Toolbars />
        <main className="flex min-h-0 flex-1">
          <aside className="w-[23px] shrink-0 pt-[7px]">
            <button
              className={clsx(
                "flex h-[51px] w-[21px] flex-col items-center gap-1 rounded-r border border-l-0 border-[#8fb3e8] bg-gradient-to-r from-[#eaf3ff] to-[#c8dffd] pt-[2px] text-[12px] text-[#15428b]",
                UI
              )}>
              <FolderIcon />
              <span className="leading-3 [writing-mode:vertical-rl]">Files</span>
            </button>
          </aside>
          <div className="z-10 flex w-[394px] shrink-0 flex-col gap-1 bg-[#86a7dc]">
            <TreePanel />
            <ReportPanel />
          </div>
          <span className="w-1 shrink-0 bg-gradient-to-b from-[#bdd5f8] to-[#7f9fd3]" />
          <div className="flex min-w-0 flex-1 flex-col gap-1 bg-[#7b9bd0]">
            <Viewport />
            <CodePanel />
          </div>
          <RightDock />
        </main>
        <StatusBar />
      </div>
    </div>
  );
}
